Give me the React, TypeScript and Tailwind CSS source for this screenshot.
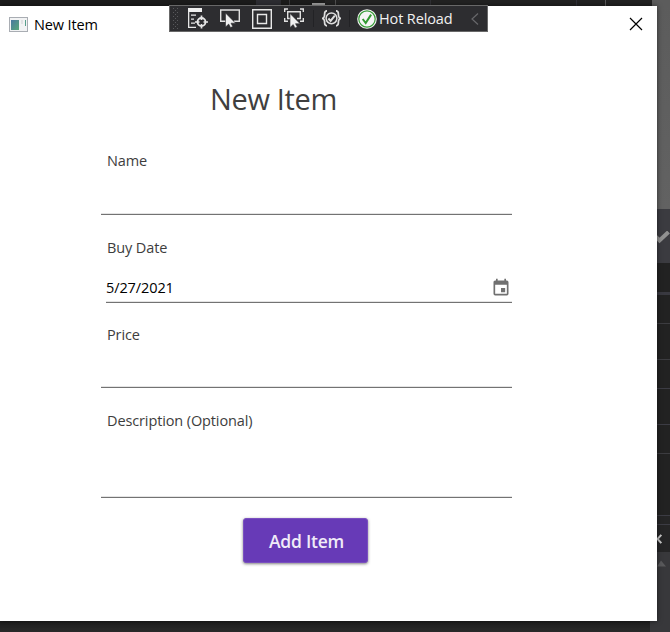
import type { ReactNode } from "react";

const STRIP = [
  { h: "h-[32px]", c: "bg-[#222222] border-b-[3px] border-[#393940]" },
  { h: "h-[29px]", c: "bg-[#222222] border-b border-[#3c3c40]" },
  { h: "h-[36px]", c: "bg-[#222222] border-b border-[#3c3c40]" },
  { h: "h-[29px]", c: "bg-[#222222] border-b border-[#3c3c44]" },
  { h: "h-[36px]", c: "bg-[#222222] border-b border-[#3c3c44]" },
  { h: "h-[29px]", c: "bg-[#222222] border-b border-[#3c3c40]" },
  { h: "h-[62px]", c: "bg-[#222222] border-b border-[#3c3c44]" },
  { h: "h-[9px]", c: "bg-[#252526] border-b border-[#3c3c44]" },
];

function Backdrop() {
  return (
    <div className="flex h-[632px] w-[670px] flex-col bg-[#222222]">
      <div className="flex h-[6px] shrink-0 bg-[#1c1c1c]">
        <div className="w-[256px]" />
        <div className="w-[25px] bg-[#2d2d32]" />
        <div className="w-[9px] border-r border-[#3a3a3d]" />
        <div className="w-[22px]" />
        <div className="mt-[3px] w-[13px] bg-[#a0a0a0]" />
        <div className="w-[11px] border-r border-[#505050] bg-[#222222]" />
        <div className="w-[95px] border-r border-[#303034] bg-[#222222]" />
        <div className="w-[146px] border-r border-[#303038] bg-[#222222]" />
        <div className="w-[29px] border-r border-[#5a5a5a] bg-[#222222]" />
        <div className="w-[46px] bg-[#222222]" />
        <div className="w-[18px] bg-[#5c5c5c]" />
      </div>
      <div className="flex flex-1">
        <div className="flex w-[650px] flex-col justify-end">
          <div className="h-[11px] bg-gradient-to-b from-[#1d1d1d] to-[#292929]" />
        </div>
        <div className="flex w-[20px] flex-col bg-[#38383b]">
          <div className="h-[203px] bg-gradient-to-b from-[#5c5c5c] to-[#626262]" />
          <div className="flex h-[54px] items-center justify-end bg-[#3b3b40]">
            <svg className="mt-[4px]" width="16" height="14" viewBox="0 0 16 14" fill="none" stroke="#919191" strokeWidth="4">
              <path d="M0 4l5.5 5.5L14.5 1" />
            </svg>
          </div>
          {STRIP.map((s, i) => (
            <div key={i} className={`shrink-0 ${s.h} ${s.c}`} />
          ))}
          <div className="flex h-[27px] shrink-0 items-center bg-[#252526] pl-[5px]">
            <svg width="8" height="10" viewBox="0 0 8 10" fill="none" stroke="#c8c8c8" strokeWidth="2">
              <path d="M0 5h3M6.3 .8L2.5 5l3.8 4.2" />
            </svg>
          </div>
          <svg className="ml-[7px] mt-[8px]" width="9" height="7" viewBox="0 0 9 7">
            <path d="M4 .5L9 6.5H0z" fill="#59595b" />
          </svg>
        </div>
      </div>
    </div>
  );
}

function CalendarIcon() {
  return (
    <svg width="20" height="20" viewBox="0 0 24 24" fill="#707070">
      <path d="M19 19H5V8h14m-3-7v2H8V1H6v2H5c-1.11 0-2 .89-2 2v14a2 2 0 0 0 2 2h14a2 2 0 0 0 2-2V5a2 2 0 0 0-2-2h-1V1m-1 11h-5v5h5v-5z" />
    </svg>
  );
}

function Field({ label, box, children }: { label: string; box: string; children?: ReactNode }) {
  return (
    <div className="flex flex-col">
      <label className="ml-[6px] h-[20px] whitespace-nowrap text-[14.5px] leading-[20px] tracking-[-0.12px] text-[#3d3d3d]">{label}</label>
      <div className={`flex items-end border-b border-[#737373] shadow-[inset_0_-1px_0_#e4e4e4] ${box}`}>{children}</div>
    </div>
  );
}

function Cursor({ x, y }: { x: number; y: number }) {
  return (
    <path
      transform={`translate(${x} ${y})`}
      d="M0 0v14l3.2-2.9 1.8 3.5 2.3-1-1.8-3.4h4.6z"
      fill="#f0f0f0"
      stroke="#2d2d30"
      strokeWidth=".6"
    />
  );
}

function DebugToolbar() {
  return (
    <div className="absolute left-[169px] top-[5px] flex h-[27px] w-[319px] items-center border border-[#686868] bg-[#2d2d30]">
      <svg className="ml-[3px] mr-[8px]" width="7" height="22" viewBox="0 0 7 22" fill="#59595c">
        {[1, 5, 9, 13, 17, 21].map((y) => (
          <g key={y}>
            <rect x="0" y={y - 1} width="1" height="1" />
            <rect x="4" y={y - 1} width="1" height="1" />
            {y < 21 && <rect x="2" y={y + 1} width="1" height="1" />}
          </g>
        ))}
      </svg>
      <svg width="21" height="21" viewBox="0 0 21 21" fill="none" stroke="#e6e6e6" strokeWidth="1.3">
        <path d="M0 0h14v4H0z" fill="#f0f0f0" stroke="none" />
        <path d="M.65 3v16.4H8M3 7.2h5M3 11.2h3M3 15.2h4" />
        <circle cx="13.5" cy="14" r="4" strokeWidth="1.8" />
        <path d="M13.5 7.5V12M13.5 16v4.5M7 14h4.5M15.5 14H20" strokeWidth="1.7" />
      </svg>
      <svg className="ml-[11px]" width="21" height="20" viewBox="0 0 21 20" fill="none">
        <path d="M6 12.3H.7V1h18.6v11.3H14" stroke="#e0e0e0" strokeWidth="1.4" />
        <Cursor x={5.5} y={4} />
      </svg>
      <svg className="ml-[11px]" width="20" height="20" viewBox="0 0 20 20" fill="none" stroke="#e8e8e8" strokeWidth="1.4">
        <path d="M.7.7h18.6v18.6H.7zM5.5 5.5h9v9h-9z" />
      </svg>
      <svg className="ml-[12px]" width="21" height="21" viewBox="0 0 21 21" fill="none" stroke="#e0e0e0" strokeWidth="1.4">
        <path d="M.7 4V1H4M16 1h3.3v3M.7 10v3.3H4M16 13.3h3.3V10M6 10.5H3.7V3.7h12.6v6.8H13" />
        <Cursor x={6} y={5.5} />
      </svg>
      <div className="ml-[8px] h-[17px] w-px bg-[#222225]" />
      <svg className="ml-[8px]" width="19" height="17" viewBox="0 0 19 17" fill="none" stroke="#dedede" strokeWidth="1.7">
        <path d="M5 .8C2 .8 2.8 3 2.5 5.5 2.4 7.2 1.8 8 .5 8.4c1.3.4 1.9 1.2 2 2.8.3 2.6-.5 4.6 2.5 4.6M14 .8c3 0 2.2 2.2 2.5 4.7.1 1.7.7 2.5 2 2.9-1.3.4-1.9 1.2-2 2.8-.3 2.6.5 4.6-2.5 4.6" />
        <circle cx="9.5" cy="8.3" r="5.4" strokeWidth="1.5" />
        <path d="M6.4 8.5l2.2 2.4 4.2-5.2" strokeWidth="2" />
      </svg>
      <div className="ml-[8px] h-[17px] w-px bg-[#222225]" />
      <svg className="ml-[7px]" width="20" height="20" viewBox="0 0 20 20" fill="none">
        <circle cx="10" cy="10" r="9.8" fill="#f5f5f5" />
        <circle cx="10" cy="10" r="8.2" stroke="#379c37" strokeWidth="1.2" />
        <path d="M5.7 10l3 4.1 5.4-8.5" stroke="#329932" strokeWidth="2" />
      </svg>
      <span className="ml-[2px] w-[75px] whitespace-nowrap text-[14.5px] leading-[20px] tracking-[-0.12px] text-[#f1f1f1]">Hot Reload</span>
      <svg className="ml-[17px]" width="8" height="12" viewBox="0 0 8 12" fill="none" stroke="#68686b" strokeWidth="1.2">
        <path d="M7 .5L1 6l6 5.5" />
      </svg>
    </div>
  );
}

function AppIcon() {
  return (
    <svg width="19" height="15" viewBox="0 0 19 15">
      <defs>
        <linearGradient id="pane" x1="0" y1="0" x2="1" y2="1">
          <stop offset="0" stopColor="#4a78a0" />
          <stop offset="1" stopColor="#58a878" />
        </linearGradient>
      </defs>
      <rect x=".5" y=".5" width="18" height="14" fill="#f2f3f4" stroke="#a9adb3" />
      <rect x="2" y="3" width="8" height="10" fill="url(#pane)" />
      <rect x="12" y="3" width="2" height="4" fill="#e0e2e3" />
      <rect x="16" y="3" width="1" height="6" fill="#58a08c" />
    </svg>
  );
}

export default function App() {
  return (
    <div className="relative h-[632px] w-[670px] overflow-hidden font-['Open_Sans','Noto_Sans',sans-serif]">
      <Backdrop />
      <main className="absolute left-0 top-[6px] flex h-[615px] w-[657px] flex-col bg-white shadow-[0_0_5px_rgba(0,0,0,0.55)]">
        <header className="flex h-[36px] items-center pl-[9px] pr-[14px]">
          <AppIcon />
          <span className="ml-[6px] mt-[2px] whitespace-nowrap text-[14.5px] leading-[20px] tracking-[-0.12px] text-black">New Item</span>
          <button className="ml-auto" aria-label="Close">
            <svg width="14" height="14" viewBox="0 0 14 14" fill="none" stroke="#000" strokeWidth="1.2">
              <path d="M1 1l12 12M13 1L1 13" />
            </svg>
          </button>
        </header>
        <h1 className="ml-[210px] mt-[37px] h-[40px] whitespace-nowrap text-[29px] leading-[40px] tracking-[-0.35px] text-[#3f3f3f]">New Item</h1>
        <form className="ml-[101px] mt-[32px] flex w-[411px] flex-col">
          <Field label="Name" box="h-[44px]" />
          <div className="h-[23px]" />
          <Field label="Buy Date" box="ml-[5px] h-[45px]">
            <span className="flex-1 pb-[4px] text-[14.5px] leading-[20px] tracking-[-0.1px] text-black">5/27/2021</span>
            <span className="mr-px pb-[4px]"><CalendarIcon /></span>
          </Field>
          <div className="h-[22px]" />
          <Field label="Price" box="h-[43px]" />
          <div className="h-[23px]" />
          <Field label="Description (Optional)" box="h-[67px]" />
          <button
            type="button"
            className="ml-[142px] mt-[20px] h-[45px] w-[125px] whitespace-nowrap rounded-[3px] border border-[#7a50c0] bg-[#673ab7] pl-[2px] text-[17.5px] font-semibold leading-[20px] tracking-[-0.25px] text-[#f0ebf8] shadow-[0_1px_3px_rgba(0,0,0,0.5)]"
          >
            Add Item
          </button>
        </form>
      </main>
      <DebugToolbar />
    </div>
  );
}
